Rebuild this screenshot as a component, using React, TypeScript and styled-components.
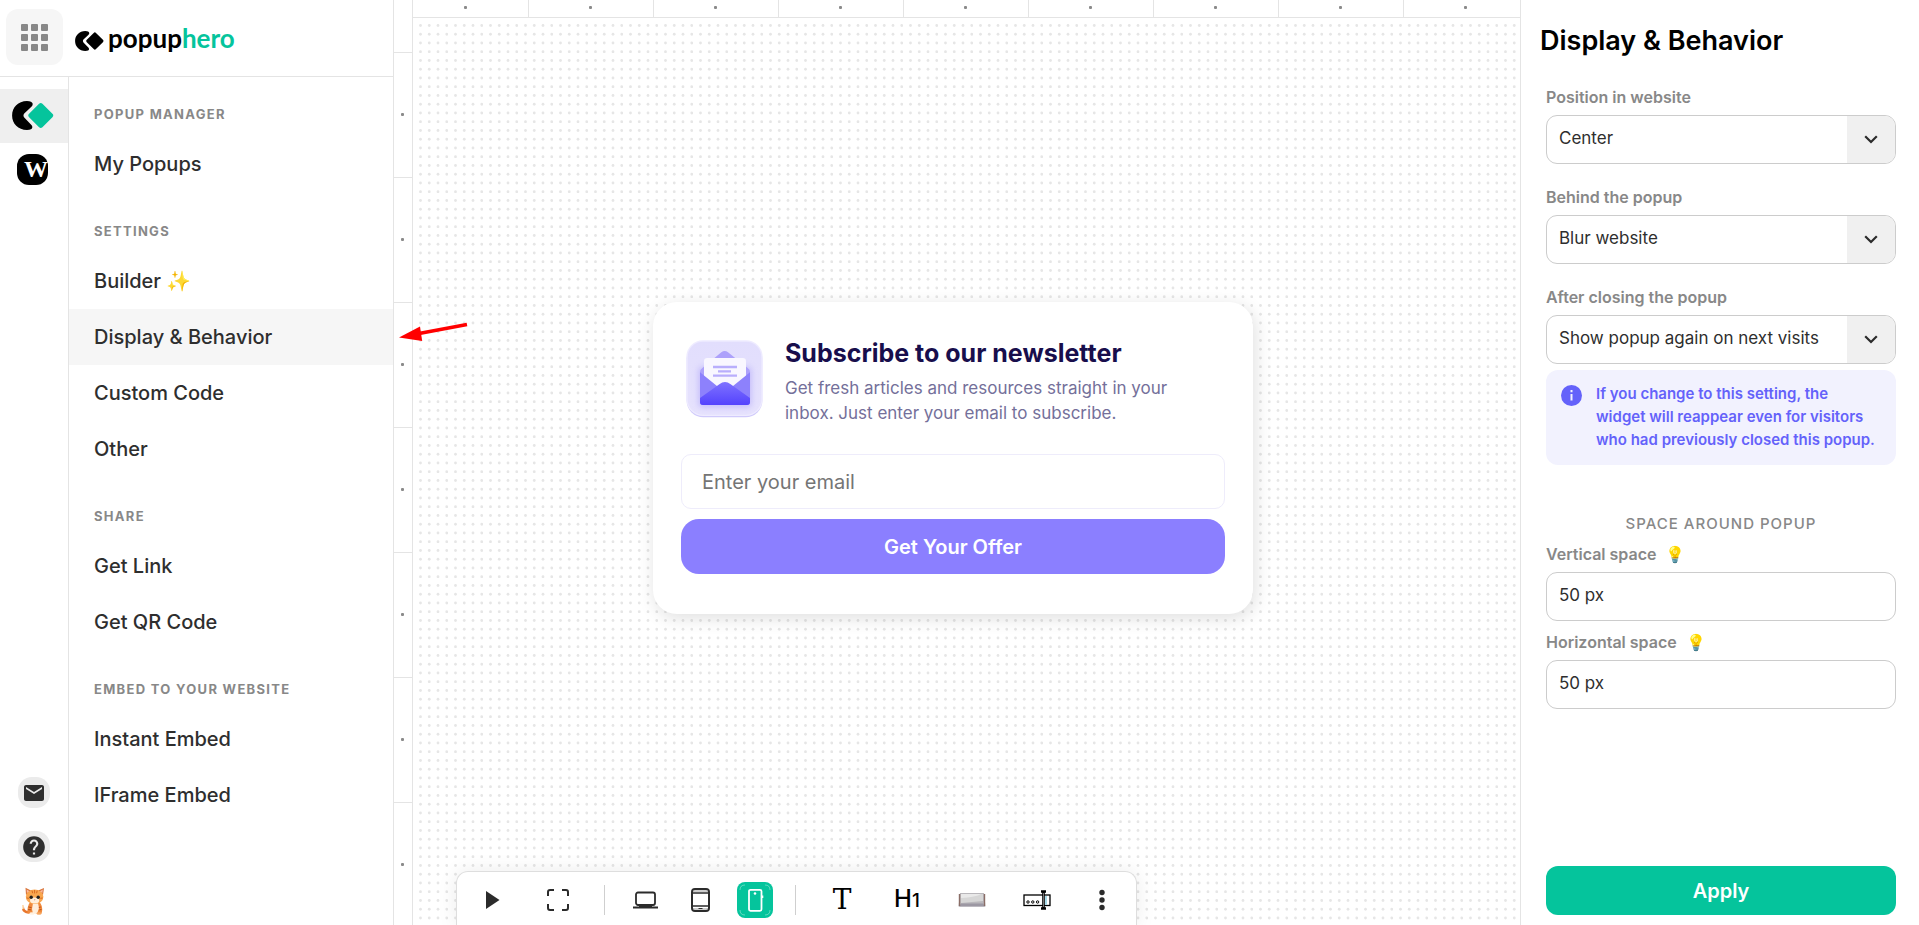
import React from "react";
import styled, { createGlobalStyle, css } from "styled-components";
import { MdEmail, MdHelp } from "react-icons/md";

const color = {
  green: "#05c49c",
  line: "#e4e4e4",
  ink: "#2e2e2e",
  muted: "#888888",
  violet: "#8b7fff",
  info: "#6462fa",
};

/* 35px tile holding a 4 x 4 grid of canvas dots */
const dots = [0, 1, 2, 3]
  .flatMap((r) => [0, 1, 2, 3].map((c) => `<circle cx='${7.5 + c * 8.75}' cy='${7.5 + r * 8.75}' r='1.4'/>`))
  .join("");
const dotTile = `url("data:image/svg+xml,${encodeURIComponent(
  `<svg xmlns='http://www.w3.org/2000/svg' width='35' height='35' fill='#e6e6e6'>${dots}</svg>`
)}")`;

const GlobalStyle = createGlobalStyle`
  *, *::before, *::after { box-sizing: border-box; }
  body { margin: 0; background: #fff; color: ${color.ink}; font-family: Inter, Roboto, sans-serif; }
  button, input, select { font-family: inherit; color: inherit; margin: 0; }
  button { border: 0; padding: 0; background: none; cursor: pointer; }
  h1, h2, p, ul { margin: 0; padding: 0; }
`;

const Shell = styled.div`
  display: grid;
  grid-template: 100vh / 394px minmax(0, 1fr) 399px;
`;

/* ---------- left side ---------- */

const Sidebar = styled.aside`
  display: grid;
  grid-template: 77px minmax(0, 1fr) / 69px 1fr;
  border-right: 1px solid ${color.line};
`;

const Brand = styled.header`
  grid-column: 1 / -1;
  display: flex;
  align-items: flex-start;
  gap: 12px;
  padding: 9px 6px 0;
  border-bottom: 1px solid ${color.line};
`;

const AppsButton = styled.button`
  display: grid;
  place-items: center;
  width: 57px;
  height: 56px;
  border-radius: 12px;
  background: #f6f6f6;
`;

const Wordmark = styled.a`
  display: flex;
  align-items: center;
  gap: 4px;
  padding-top: 12px;
  color: #000;
  font: 700 26px/34px Lato, Inter, sans-serif;
  text-decoration: none;

  svg { margin-top: 6px; }
  em { color: ${color.green}; font-style: normal; }
`;

const Rail = styled.nav`
  display: flex;
  flex-direction: column;
  padding: 12px 0 9px;
  border-right: 1px solid ${color.line};
`;

const RailItem = styled.button<{ $active?: boolean }>`
  display: grid;
  place-items: center;
  height: 54px;
  padding: 0 3px 2px 0;
  background: ${(p) => (p.$active ? "#efefef" : "transparent")};
`;

const WordPressTile = styled.span`
  display: block;
  width: 31px;
  height: 31px;
  padding-left: 7px;
  border-radius: 12px;
  background: #000;
  color: #fff;
  font: 700 24px/31px "Liberation Serif", serif;
`;

const RailFooter = styled.div`
  display: flex;
  flex-direction: column;
  align-items: center;
  gap: 23px;
  margin-top: auto;
`;

const RailPill = styled.button<{ $plain?: boolean }>`
  display: grid;
  place-items: center;
  width: 32px;
  height: 31px;
  border-radius: 14px;
  background: ${(p) => (p.$plain ? "transparent" : "#ebebeb")};
`;

const MenuHeading = styled.h2`
  padding: 30px 25px 13px;
  color: ${color.muted};
  font-size: 13px;
  font-weight: 700;
  line-height: 18px;
  letter-spacing: 0.1em;
  text-transform: uppercase;
`;

const Menu = styled.nav`
  section:first-child ${MenuHeading} { padding-top: 28px; }
`;

const MenuLink = styled.a<{ $active?: boolean }>`
  display: flex;
  align-items: center;
  height: 56px;
  padding: 0 25px;
  background: ${(p) => (p.$active ? "#f6f6f6" : "transparent")};
  color: ${color.ink};
  font-size: 20px;
  font-weight: 500;
  text-decoration: none;
`;

/* ---------- workspace ---------- */

const Workspace = styled.main`
  position: relative;
  display: grid;
  grid-template: 18px minmax(0, 1fr) / 19px minmax(0, 1fr);
  min-width: 0;
`;

const Ruler = styled.div<{ $vertical?: boolean }>`
  display: flex;
  overflow: hidden;
  ${(p) =>
    p.$vertical
      ? css`
          grid-row: 1 / -1;
          flex-direction: column;
          border-right: 1px solid ${color.line};
        `
      : css`
          border-bottom: 1px solid ${color.line};
        `}
`;

const Tick = styled.span<{ $vertical?: boolean }>`
  flex: 0 0 125px;
  display: grid;
  place-items: center;
  ${(p) =>
    p.$vertical
      ? css`
          padding: 0 2px 2px 0;
          border-bottom: 1px solid ${color.line};
          &:first-child { margin-top: -72px; }
        `
      : css`
          padding: 0 2px 3px 0;
          border-right: 1px solid ${color.line};
          &:first-child { margin-left: -9px; }
        `}

  &::after {
    content: "";
    width: 3px;
    height: 3px;
    border-radius: 1px;
    background: #8a8a8a;
  }
`;

const Canvas = styled.section`
  position: relative;
  display: flex;
  align-items: center;
  justify-content: center;
  padding: 0 27px 27px 0;
  background: ${dotTile};
`;

const Popup = styled.form`
  display: flex;
  flex-direction: column;
  width: 600px;
  padding: 36px 28px 40px;
  border-radius: 24px;
  background: #fff;
  box-shadow: 2px 4px 18px rgba(0, 0, 0, 0.13);
`;

const PopupIntro = styled.div`
  display: flex;
  gap: 22px;
  padding-left: 5px;
  margin-bottom: 28px;

  svg { flex: none; margin-top: 2px; }
`;

const PopupTitle = styled.h2`
  margin-bottom: 8px;
  color: #180e4c;
  font-size: 25px;
  font-weight: 700;
  line-height: 30px;
`;

const PopupText = styled.p`
  color: #74709a;
  font-size: 17px;
  line-height: 25px;
`;

const EmailInput = styled.input`
  height: 55px;
  margin-bottom: 10px;
  padding: 0 20px;
  border: 1px solid #eeecfb;
  border-radius: 10px;
  background: #fff;
  font-size: 20px;

  &::placeholder { color: #757575; opacity: 1; }
`;

const OfferButton = styled.button`
  height: 55px;
  border-radius: 18px;
  background: ${color.violet};
  color: #fff;
  font-size: 20px;
  font-weight: 600;
`;

const Toolbar = styled.div`
  position: absolute;
  left: 43px;
  bottom: 0;
  display: flex;
  align-items: center;
  height: 54px;
  padding: 3px 16px 0 17px;
  border: 1px solid #dedede;
  border-bottom: 0;
  border-radius: 12px 12px 0 0;
  background: #fff;
  box-shadow: 0 0 20px rgba(0, 0, 0, 0.08);
`;

const ToolGroup = styled.div<{ $gap: number }>`
  display: flex;
  gap: ${(p) => p.$gap}px;
`;

const Divider = styled.span<{ $before: number; $after: number }>`
  width: 1px;
  height: 30px;
  margin: 0 ${(p) => p.$after}px 0 ${(p) => p.$before}px;
  background: #cfcfcf;
`;

const Tool = styled.button<{ $active?: boolean }>`
  display: flex;
  align-items: center;
  justify-content: center;
  width: 36px;
  height: 36px;
  border-radius: 8px;
  background: ${(p) => (p.$active ? color.green : "transparent")};
`;

const SlabLetter = styled.span`
  color: #000;
  font: 400 28px/36px "DejaVu Serif", serif;
`;

const HeadingMark = styled.span`
  color: #000;
  font-size: 24px;
  font-weight: 500;
  line-height: 36px;

  small { font-size: 19px; }
`;

const Pointer = styled.svg`
  position: absolute;
  left: 5px;
  top: 322px;
`;

/* ---------- settings panel ---------- */

const Panel = styled.aside`
  display: flex;
  flex-direction: column;
  padding: 24px 23px 10px 25px;
  border-left: 1px solid ${color.line};
  background: #fff;
`;

const PanelTitle = styled.h1`
  margin: 0 0 27px -6px;
  color: #000;
  font-size: 27px;
  font-weight: 600;
  line-height: 34px;
`;

const Field = styled.div<{ $after: number }>`
  display: flex;
  flex-direction: column;
  gap: 6px;
  margin-bottom: ${(p) => p.$after}px;
`;

const Label = styled.label`
  color: ${color.muted};
  font-size: 16px;
  font-weight: 600;
  line-height: 24px;

  span { margin-left: 9px; }
`;

const controlBox = css`
  width: 100%;
  height: 49px;
  padding: 0 12px 3px;
  border: 1px solid #cccccc;
  border-radius: 11px;
  background: #fff;
  font-size: 17px;
`;

const TextInput = styled.input`
  ${controlBox}
`;

const SelectBox = styled.div`
  position: relative;
  display: flex;
`;

const Select = styled.select`
  ${controlBox}
  appearance: none;
`;

const SelectArrow = styled.span`
  position: absolute;
  top: 1px;
  right: 1px;
  bottom: 1px;
  display: grid;
  place-items: center;
  width: 48px;
  border-radius: 0 10px 10px 0;
  background: #f0f0f0;
  pointer-events: none;
`;

const Notice = styled.div`
  display: flex;
  gap: 14px;
  margin-bottom: 47px;
  padding: 12px 10px 14px 15px;
  border-radius: 12px;
  background: #f2f2fe;
  color: ${color.info};
  font-size: 15px;
  font-weight: 600;
  line-height: 23px;

  svg { flex: none; margin-top: 3px; }
`;

const GroupTitle = styled.h2`
  margin-bottom: 6px;
  color: ${color.muted};
  font-size: 15px;
  font-weight: 500;
  line-height: 24px;
  letter-spacing: 1px;
  text-align: center;
  text-transform: uppercase;
`;

const ApplyButton = styled.button`
  flex: none;
  height: 49px;
  margin-top: auto;
  border-radius: 12px;
  background: ${color.green};
  color: #fff;
  font-size: 20px;
  font-weight: 600;
`;

/* ---------- drawings ---------- */

const BrandShape = ({ width, height, accent }: { width: number; height: number; accent: string }) => (
  <svg width={width} height={height} viewBox="0 0 124 86" aria-hidden="true">
    <path
      d="M44 0C18 0 0 19 0 43s18 43 44 43c5 0 9-1 12-2 5-3 5-8 2-12L36 49c-3-4-3-8 0-12l22-21c5-5 4-11-2-14-3-1-7-2-12-2z"
      fill="#000"
    />
    <rect x="57" y="15" width="56" height="56" rx="7" transform="rotate(45 85 43)" fill={accent} />
  </svg>
);

const AppsGlyph = () => (
  <svg width="27" height="27" viewBox="0 0 27 27" fill="#888" aria-hidden="true">
    {[0, 10, 20].map((y) => [0, 10, 20].map((x) => <rect key={`${x}-${y}`} x={x} y={y} width="7" height="7" rx="1" />))}
  </svg>
);

const Cat = () => (
  <svg width="24" height="28" viewBox="0 0 24 28" aria-hidden="true">
    <path d="M8 25c-4 1-7-1-7.500-5.500" fill="none" stroke="#e8762c" strokeWidth="2.600" strokeLinecap="round" />
    <path d="M.8 19.200l-.2 2" stroke="#ffe3bd" strokeWidth="2.200" strokeLinecap="round" />
    <path d="M8 15c-2 3-3 7-2.500 11.500h14C21 22 20 18 17.500 15z" fill="#f08a3c" />
    <path d="M11 16h5l1 5-2 6h-4l-1-5z" fill="#ffeeda" />
    <path d="M6.500 20l3 .6M6.200 22.500l3 .4M18.800 20l-2 .5M19.500 22.500l-2.200.4" stroke="#b9501a" strokeWidth="1" />
    <ellipse cx="10" cy="26.500" rx="2.600" ry="1.300" fill="#fff2e2" />
    <ellipse cx="17" cy="26.500" rx="2.600" ry="1.300" fill="#f6a65f" />
    <path d="M4 8L3.500.800 10 4zM21 8l1-7-7 3z" fill="#d9743a" />
    <path d="M5 6l-.4-3.600L8 4.500zM20.300 6l.6-3.400L17.500 4.500z" fill="#f9b9a0" />
    <ellipse cx="12.600" cy="9.800" rx="8.800" ry="7.200" fill="#f9a750" />
    <ellipse cx="12.600" cy="13.600" rx="4.600" ry="3" fill="#fff0dc" />
    <path d="M12.600 3v3.400M10 3.600l.6 2.600M15.200 3.600l-.6 2.600M4.500 11l2.400.3M20.700 11l-2.400.3" stroke="#d9691f" strokeWidth="1" />
    <circle cx="9.200" cy="10.300" r="1.700" fill="#23201f" />
    <circle cx="16.200" cy="10.300" r="1.700" fill="#23201f" />
    <path d="M12 12.400h1.500l-.7 1z" fill="#c5564a" />
  </svg>
);

const NewsletterArt = () => (
  <svg width="77" height="78" viewBox="0 0 231 234" aria-hidden="true">
    <defs>
      <linearGradient id="tile" x1="0" y1="0" x2="0" y2="1">
        <stop offset="0" stopColor="#e2defd" />
        <stop offset="1" stopColor="#e6e2fd" />
      </linearGradient>
      <linearGradient id="pocket" x1="0" y1="0" x2="0" y2="1">
        <stop offset="0" stopColor="#7f72ff" />
        <stop offset="1" stopColor="#5443fd" />
      </linearGradient>
      <filter id="soft" x="-30%" y="-30%" width="160%" height="160%">
        <feGaussianBlur stdDeviation="9" />
      </filter>
    </defs>
    <rect x="2" y="5" width="227" height="227" rx="50" fill="#d0cafb" />
    <rect x="1" y="1" width="229" height="227" rx="50" fill="#eeebff" />
    <rect x="5" y="5" width="221" height="219" rx="46" fill="url(#tile)" />
    <rect x="38" y="80" width="158" height="122" rx="12" fill="#a79df8" opacity=".55" filter="url(#soft)" />
    <path d="M42 97q0-9 8-14L106 37q10-8 20 0l58 46q8 5 8 14v60H42z" fill="#ada1fb" />
    <path d="M54 64q0-10 10-10h106q10 0 10 10v90H54z" fill="#f9f7ff" />
    <path d="M81 81h72M96 94h39M81 107h72" stroke="#b9aefc" strokeWidth="7" />
    <path d="M42 97l62 50h26l62-50v89q0 9-9 9H51q-9 0-9-9z" fill="#8d81fc" />
    <path d="M42 174l58-41q17-14 34 0l58 41v12q0 9-9 9H51q-9 0-9-9z" fill="url(#pocket)" />
  </svg>
);

const stroke = { fill: "none", stroke: "#2b2b2b", strokeWidth: 2 } as const;

const PlayGlyph = () => (
  <svg width="15" height="18" viewBox="0 0 15 18" aria-hidden="true">
    <path d="M1 0l13.500 9L1 18z" fill="#2b2b2b" />
  </svg>
);
const FullscreenGlyph = () => (
  <svg width="22" height="22" viewBox="0 0 22 22" {...stroke} aria-hidden="true">
    <path d="M1 7V3q0-2 2-2h4M15 1h4q2 0 2 2v4M21 15v4q0 2-2 2h-4M7 21H3q-2 0-2-2v-4" />
  </svg>
);
const LaptopGlyph = () => (
  <svg width="25" height="18" viewBox="0 0 25 18" aria-hidden="true">
    <rect x="3" y="1.500" width="19" height="12.500" rx="2" {...stroke} strokeWidth={1.800} />
    <path d="M0 15.500h25v2H0zM6 14h13v3H6z" fill="#2b2b2b" />
  </svg>
);
const TabletGlyph = () => (
  <svg width="19" height="24" viewBox="0 0 19 24" aria-hidden="true">
    <rect x="1" y="1" width="17" height="22" rx="3" {...stroke} />
    <path d="M1 5h17M1 18h17" {...stroke} strokeWidth={1.500} />
    <path d="M2 3h15M2 21h15" stroke="#9a9a9a" />
    <path d="M7.500 20.500h4" stroke="#2b2b2b" />
  </svg>
);
const PhoneGlyph = () => (
  <svg width="36" height="36" viewBox="0 0 36 36" fill="none" stroke="#fff" aria-hidden="true">
    <rect x="12" y="7.800" width="12.500" height="21" rx="1.500" strokeWidth="1.800" />
    <path d="M25.500 13.500v2.500" strokeWidth="1.600" />
    <circle cx="18" cy="11.500" r="1.300" fill="#fff" stroke="none" />
    <path d="M3 8Q3 3 8 3M28 3q5 0 5 5M33 28q0 5-5 5M8 33q-5 0-5-5" strokeWidth=".6" opacity=".6" />
  </svg>
);
const ButtonGlyph = () => (
  <svg width="28" height="14" viewBox="0 0 28 14" aria-hidden="true">
    <path d="M2 0h24l1.500 13.500H.5z" fill="#b9b7bb" />
    <path d="M3 1h22v7Q14 9 3 10z" fill="#d6d6d6" />
    <path d="M3 1h20Q18 4 3 5z" fill="#e9e9e9" />
    <path d="M3 10.500h22l2 3H1z" fill="#9c98a3" />
    <path d="M1.500 1v12M26.500 1v12" stroke="#8a6d66" strokeWidth="1.400" />
  </svg>
);
const FieldGlyph = () => (
  <svg width="28" height="20" viewBox="0 0 28 20" fill="none" stroke="#000" aria-hidden="true">
    <rect x="1" y="5" width="26" height="10.500" strokeWidth="1.300" />
    <circle cx="5" cy="12" r="1.200" />
    <circle cx="9.800" cy="12" r="1.200" />
    <circle cx="14.600" cy="12" r="1.200" />
    <path d="M23 6v9" stroke="#a9dcea" strokeWidth="2" />
    <path d="M18 1.500h5M20.500 2v16M18 18.500h5" strokeWidth="2.600" />
    <path d="M20.500 3v14" stroke="#8f8f8f" strokeWidth=".8" />
  </svg>
);
const MoreGlyph = () => (
  <svg width="6" height="22" viewBox="0 0 6 22" fill="#2b2b2b" aria-hidden="true">
    <circle cx="3" cy="3.500" r="2.700" />
    <circle cx="3" cy="11" r="2.700" />
    <circle cx="3" cy="18.500" r="2.700" />
  </svg>
);
const Chevron = () => (
  <svg width="14" height="9" viewBox="0 0 14 9" fill="none" stroke="#2b2b2b" strokeWidth="2.200" aria-hidden="true">
    <path d="M1.200 1.200L7 7l5.800-5.800" />
  </svg>
);
const InfoGlyph = () => (
  <svg width="21" height="21" viewBox="0 0 21 21" aria-hidden="true">
    <circle cx="10.500" cy="10.500" r="10.500" fill={color.info} />
    <path d="M10.500 9v6.500M10.500 5v2.200" stroke="#f2f2fe" strokeWidth="2" />
  </svg>
);

/* ---------- data ---------- */

const menu = [
  { title: "Popup manager", items: ["My Popups"] },
  { title: "Settings", items: ["Builder ✨", "Display & Behavior", "Custom Code", "Other"] },
  { title: "Share", items: ["Get Link", "Get QR Code"] },
  { title: "Embed to your website", items: ["Instant Embed", "IFrame Embed"] },
];

const ticks = Array.from({ length: 20 }, (_, i) => i);

function SelectField({ id, label, options, after }: { id: string; label: string; options: string[]; after: number }) {
  return (
    <Field $after={after}>
      <Label htmlFor={id}>{label}</Label>
      <SelectBox>
        <Select id={id}>
          {options.map((o) => (
            <option key={o}>{o}</option>
          ))}
        </Select>
        <SelectArrow>
          <Chevron />
        </SelectArrow>
      </SelectBox>
    </Field>
  );
}

function SpaceField({ id, label, after }: { id: string; label: string; after: number }) {
  return (
    <Field $after={after}>
      <Label htmlFor={id}>
        {label}
        <span>💡</span>
      </Label>
      <TextInput id={id} defaultValue="50 px" />
    </Field>
  );
}

export default function App() {
  return (
    <>
      <GlobalStyle />
      <Shell>
        <Sidebar>
          <Brand>
            <AppsButton aria-label="All apps">
              <AppsGlyph />
            </AppsButton>
            <Wordmark href="#home">
              <BrandShape width={29} height={20} accent="#000" />
              <span>
                popup<em>hero</em>
              </span>
            </Wordmark>
          </Brand>

          <Rail>
            <RailItem $active aria-label="Popup Hero">
              <BrandShape width={42} height={29} accent={color.green} />
            </RailItem>
            <RailItem aria-label="WordPress">
              <WordPressTile>W</WordPressTile>
            </RailItem>
            <RailFooter>
              <RailPill aria-label="Messages">
                <MdEmail size={24} />
              </RailPill>
              <RailPill aria-label="Help">
                <MdHelp size={26} />
              </RailPill>
              <RailPill $plain aria-label="Account">
                <Cat />
              </RailPill>
            </RailFooter>
          </Rail>

          <Menu>
            {menu.map((group) => (
              <section key={group.title}>
                <MenuHeading>{group.title}</MenuHeading>
                {group.items.map((item) => (
                  <MenuLink key={item} href="#" $active={item === "Display & Behavior"}>
                    {item}
                  </MenuLink>
                ))}
              </section>
            ))}
          </Menu>
        </Sidebar>

        <Workspace>
          <Ruler $vertical>
            {ticks.map((i) => (
              <Tick key={i} $vertical />
            ))}
          </Ruler>
          <Ruler>
            {ticks.map((i) => (
              <Tick key={i} />
            ))}
          </Ruler>

          <Canvas>
            <Popup onSubmit={(e) => e.preventDefault()}>
              <PopupIntro>
                <NewsletterArt />
                <div>
                  <PopupTitle>Subscribe to our newsletter</PopupTitle>
                  <PopupText>
                    Get fresh articles and resources straight in your
                    <br />
                    inbox. Just enter your email to subscribe.
                  </PopupText>
                </div>
              </PopupIntro>
              <EmailInput type="email" aria-label="Email" placeholder="Enter your email" />
              <OfferButton type="submit">Get Your Offer</OfferButton>
            </Popup>

            <Toolbar>
              <ToolGroup $gap={30}>
                <Tool aria-label="Preview"><PlayGlyph /></Tool>
                <Tool aria-label="Full screen"><FullscreenGlyph /></Tool>
              </ToolGroup>
              <Divider $before={28} $after={22} />
              <ToolGroup $gap={19}>
                <Tool aria-label="Desktop"><LaptopGlyph /></Tool>
                <Tool aria-label="Tablet"><TabletGlyph /></Tool>
                <Tool aria-label="Phone" $active><PhoneGlyph /></Tool>
              </ToolGroup>
              <Divider $before={22} $after={28} />
              <ToolGroup $gap={29}>
                <Tool aria-label="Add text"><SlabLetter>T</SlabLetter></Tool>
                <Tool aria-label="Add heading"><HeadingMark>H<small>1</small></HeadingMark></Tool>
                <Tool aria-label="Add button"><ButtonGlyph /></Tool>
                <Tool aria-label="Add input"><FieldGlyph /></Tool>
                <Tool aria-label="More"><MoreGlyph /></Tool>
              </ToolGroup>
            </Toolbar>
          </Canvas>

          <Pointer width="70" height="22" viewBox="0 0 70 22" aria-hidden="true">
            <path d="M20 11.500L68 2.500" stroke="#f00" strokeWidth="3.600" />
            <path d="M0 15.500L21 4.500l2.200 14.500z" fill="#f00" />
          </Pointer>
        </Workspace>

        <Panel>
          <PanelTitle>Display &amp; Behavior</PanelTitle>
          <SelectField id="position" label="Position in website" options={["Center"]} after={21} />
          <SelectField id="behind" label="Behind the popup" options={["Blur website"]} after={21} />
          <SelectField id="closing" label="After closing the popup" options={["Show popup again on next visits"]} after={6} />
          <Notice>
            <InfoGlyph />
            <p>
              If you change to this setting, the
              <br />
              widget will reappear even for visitors
              <br />
              who had previously closed this popup.
            </p>
          </Notice>
          <GroupTitle>Space around popup</GroupTitle>
          <SpaceField id="vertical" label="Vertical space" after={9} />
          <SpaceField id="horizontal" label="Horizontal space" after={24} />
          <ApplyButton>Apply</ApplyButton>
        </Panel>
      </Shell>
    </>
  );
}
